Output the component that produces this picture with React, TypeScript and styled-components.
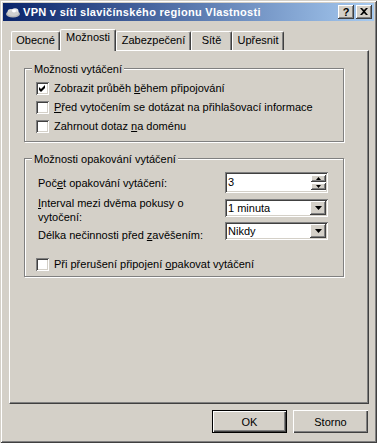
import React from "react";
import styled, { createGlobalStyle } from "styled-components";

const face = "#d4d0c8";
const shadow = "#808080";
const dark = "#404040";

const GlobalStyle = createGlobalStyle`
  html, body { margin: 0; padding: 0; background: ${face}; }
  body { font-family: "Liberation Sans", Arial, sans-serif; font-size: 11px; color: #000; }
  * { box-sizing: border-box; }
`;

const Window = styled.div`
  width: 377px;
  height: 443px;
  padding: 3px;
  background: ${face};
  display: flex;
  flex-direction: column;
  box-shadow: inset 1px 1px 0 ${face}, inset -1px -1px 0 ${dark},
    inset 2px 2px 0 #fff, inset -2px -2px 0 ${shadow};
`;

const TitleBar = styled.div`
  height: 18px;
  flex: none;
  display: flex;
  align-items: center;
  padding: 0 2px;
  background: linear-gradient(to right, #0a246a, #a6caf0);
`;

const TitleIcon = styled.svg`
  width: 16px;
  height: 16px;
  flex: none;
`;

const TitleText = styled.div`
  margin-left: 2px;
  flex: 1;
  color: #fff;
  font-weight: bold;
  font-size: 11px;
  letter-spacing: 0.3px;
  white-space: nowrap;
`;

const CaptionButton = styled.div<{ $gap?: number }>`
  width: 16px;
  height: 14px;
  flex: none;
  margin-left: ${(p) => p.$gap ?? 0}px;
  background: ${face};
  box-shadow: inset -1px -1px 0 ${dark}, inset 1px 1px 0 #fff, inset -2px -2px 0 ${shadow};
  display: flex;
  align-items: center;
  justify-content: center;
  font-weight: bold;
  font-size: 11px;
  line-height: 12px;
  padding-bottom: 1px;
`;

const Body = styled.div`
  flex: 1;
  display: flex;
  flex-direction: column;
  padding: 8px 5px 0 6px;
`;

const TabStrip = styled.div`
  height: 21px;
  flex: none;
  display: flex;
  align-items: flex-end;
  padding-left: 2px;
  position: relative;
  z-index: 1;
`;

const Tab = styled.div<{ $w: number; $active?: boolean }>`
  width: ${(p) => p.$w}px;
  height: ${(p) => (p.$active ? 22 : 19)}px;
  margin-bottom: ${(p) => (p.$active ? -1 : 0)}px;
  background: ${face};
  border-top: 1px solid #fff;
  border-left: 1px solid #fff;
  border-right: 1px solid ${dark};
  border-radius: 2px 2px 0 0;
  box-shadow: inset -1px 0 0 ${shadow};
  display: flex;
  justify-content: center;
  padding-top: ${(p) => (p.$active ? 1 : 2)}px;
  line-height: 13px;
  white-space: nowrap;
`;

const Panel = styled.div`
  height: 354px;
  flex: none;
  border-top: 1px solid #fff;
  border-left: 1px solid #fff;
  border-right: 1px solid ${dark};
  border-bottom: 1px solid ${dark};
  box-shadow: inset -1px -1px 0 ${shadow};
  padding: 17px 0 0 14px;
  display: flex;
  flex-direction: column;
`;

const Group = styled.div<{ $mt?: number; $pt: number; $pb: number }>`
  position: relative;
  width: 320px;
  margin-top: ${(p) => p.$mt ?? 0}px;
  padding: ${(p) => p.$pt}px 0 ${(p) => p.$pb}px 11px;
  border: 1px solid ${shadow};
  box-shadow: inset 1px 1px 0 #fff, 1px 1px 0 #fff;
`;

const Legend = styled.span`
  position: absolute;
  top: -6px;
  left: 7px;
  padding: 0 2px;
  background: ${face};
  line-height: 13px;
  white-space: nowrap;
`;

const CheckRow = styled.label<{ $mt?: number }>`
  height: 19px;
  margin-top: ${(p) => p.$mt ?? 0}px;
  display: flex;
  align-items: center;
  gap: 5px;
  line-height: 13px;
  white-space: nowrap;
`;

const CheckBox = styled.span`
  width: 13px;
  height: 13px;
  flex: none;
  background: #fff;
  box-shadow: inset 1px 1px 0 ${shadow}, inset -1px -1px 0 #fff,
    inset 2px 2px 0 ${dark}, inset -2px -2px 0 ${face};
  display: flex;
  align-items: center;
  justify-content: center;
`;

const Fields = styled.div`
  display: flex;
  margin-left: 2px;
`;

const LabelCol = styled.div`
  width: 187px;
  flex: none;
  display: flex;
  flex-direction: column;
`;

const FieldLabel = styled.div<{ $mt: number }>`
  margin-top: ${(p) => p.$mt}px;
  line-height: 14px;
  white-space: nowrap;
`;

const ControlCol = styled.div`
  width: 103px;
  flex: none;
  display: flex;
  flex-direction: column;
`;

const Field = styled.div<{ $h: number; $mt?: number }>`
  height: ${(p) => p.$h}px;
  margin-top: ${(p) => p.$mt ?? 0}px;
  background: #fff;
  box-shadow: inset 1px 1px 0 ${shadow}, inset -1px -1px 0 #fff,
    inset 2px 2px 0 ${dark}, inset -2px -2px 0 ${face};
  display: flex;
  align-items: stretch;
  padding: 2px;
`;

const FieldText = styled.span`
  flex: 1;
  padding-left: 1px;
  line-height: 13px;
  align-self: center;
  white-space: nowrap;
`;

const SpinCol = styled.div`
  width: 15px;
  display: flex;
  flex-direction: column;
  gap: 1px;
  padding: 1px 0;
`;

const SmallButton = styled.div<{ $w?: number }>`
  flex: 1;
  ${(p) => (p.$w ? `width: ${p.$w}px; flex: none;` : "")}
  background: ${face};
  box-shadow: inset -1px -1px 0 ${dark}, inset 1px 1px 0 #fff, inset -2px -2px 0 ${shadow};
  display: flex;
  align-items: center;
  justify-content: center;
`;

const Footer = styled.div`
  display: flex;
  justify-content: flex-end;
  gap: 6px;
  margin-top: 6px;
  padding-right: 1px;
`;

const Button = styled.button<{ $default?: boolean }>`
  width: 75px;
  height: 23px;
  padding: 0;
  font-family: inherit;
  font-size: 11px;
  color: #000;
  background: ${face};
  border: ${(p) => (p.$default ? "1px solid #000" : "none")};
  box-shadow: inset 1px 1px 0 #fff, inset -1px -1px 0 ${dark}, inset -2px -2px 0 ${shadow};
`;

const Arrow = ({ up }: { up?: boolean }) => (
  <svg width="5" height="3" viewBox="0 0 5 3">
    <path d={up ? "M2.5 0 L5 3 L0 3 Z" : "M0 0 L5 0 L2.5 3 Z"} fill="#000" />
  </svg>
);

const DropArrow = () => (
  <svg width="7" height="4" viewBox="0 0 7 4">
    <path d="M0 0 H7 L3.5 4 Z" fill="#000" />
  </svg>
);

const Check = () => (
  <svg width="7" height="7" viewBox="0 0 7 7">
    <path d="M0 2 L2 4 L6 0 L6 3 L2 7 L0 5 Z" fill="#000" />
  </svg>
);

const CheckItem = ({ checked, children, mt }: { checked?: boolean; children: React.ReactNode; mt?: number }) => (
  <CheckRow $mt={mt}>
    <CheckBox>{checked && <Check />}</CheckBox>
    <span>{children}</span>
  </CheckRow>
);

const Combo = ({ value, mt }: { value: string; mt: number }) => (
  <Field $h={18} $mt={mt}>
    <FieldText>{value}</FieldText>
    <SmallButton $w={16}>
      <DropArrow />
    </SmallButton>
  </Field>
);

const tabs = [
  { label: "Obecné", w: 49 },
  { label: "Možnosti", w: 56, active: true },
  { label: "Zabezpečení", w: 75 },
  { label: "Sítě", w: 41 },
  { label: "Upřesnit", w: 52 },
];

export default function App() {
  return (
    <>
      <GlobalStyle />
      <Window>
        <TitleBar>
          <TitleIcon viewBox="0 0 16 16">
            <ellipse cx="8" cy="10" rx="7" ry="3.5" fill="#b8b8b8" />
            <ellipse cx="6" cy="8" rx="3.5" ry="3" fill="#d8d8d8" />
            <ellipse cx="10" cy="7.5" rx="3.5" ry="3.2" fill="#e8e8e8" />
            <ellipse cx="8" cy="9.5" rx="5.5" ry="2.5" fill="#d0d0d0" />
            <ellipse cx="9" cy="7" rx="2" ry="1.4" fill="#fff" />
          </TitleIcon>
          <TitleText>VPN v síti slavičínského regionu Vlastnosti</TitleText>
          <CaptionButton>?</CaptionButton>
          <CaptionButton $gap={2}>
            <svg width="8" height="7" viewBox="0 0 8 7">
              <path
                d="M0 0 H2 L4 2 L6 0 H8 L5 3.5 L8 7 H6 L4 5 L2 7 H0 L3 3.5 Z"
                fill="#000"
              />
            </svg>
          </CaptionButton>
        </TitleBar>
        <Body>
          <TabStrip>
            {tabs.map((t) => (
              <Tab key={t.label} $w={t.w} $active={t.active}>
                {t.label}
              </Tab>
            ))}
          </TabStrip>
          <Panel>
            <Group $pt={10} $pb={5}>
              <Legend>Možnosti vytáčení</Legend>
              <CheckItem checked>
                Zobrazit průběh <u>b</u>ěhem připojování
              </CheckItem>
              <CheckItem>
                <u>P</u>řed vytočením se dotázat na přihlašovací informace
              </CheckItem>
              <CheckItem>
                Zahrnout dotaz <u>n</u>a doménu
              </CheckItem>
            </Group>
            <Group $mt={16} $pt={13} $pb={2}>
              <Legend>Možnosti opakování vytáčení</Legend>
              <Fields>
                <LabelCol>
                  <FieldLabel $mt={4}>
                    Poč<u>e</u>t opakování vytáčení:
                  </FieldLabel>
                  <FieldLabel $mt={6}>
                    <u>I</u>nterval mezi dvěma pokusy o
                    <br />
                    vytočení:
                  </FieldLabel>
                  <FieldLabel $mt={4}>
                    Délka nečinnosti před <u>z</u>avěšením:
                  </FieldLabel>
                </LabelCol>
                <ControlCol>
                  <Field $h={21}>
                    <FieldText>3</FieldText>
                    <SpinCol>
                      <SmallButton>
                        <Arrow up />
                      </SmallButton>
                      <SmallButton>
                        <Arrow />
                      </SmallButton>
                    </SpinCol>
                  </Field>
                  <Combo value="1 minuta" mt={6} />
                  <Combo value="Nikdy" mt={5} />
                </ControlCol>
              </Fields>
              <CheckItem mt={13}>
                Při přerušení připojení <u>o</u>pakovat vytáčení
              </CheckItem>
            </Group>
          </Panel>
          <Footer>
            <Button $default>OK</Button>
            <Button>Storno</Button>
          </Footer>
        </Body>
      </Window>
    </>
  );
}
